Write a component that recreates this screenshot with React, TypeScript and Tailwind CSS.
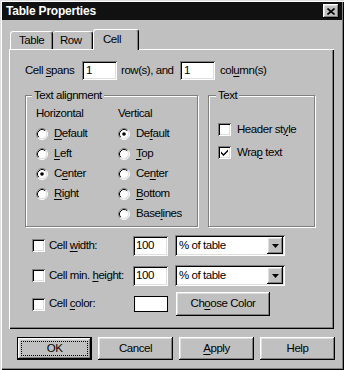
const raised =
  "shadow-[inset_-1px_-1px_#000,inset_1px_1px_#fff,inset_-2px_-2px_#808080,inset_2px_2px_#dfdfdf]";
const sunken =
  "shadow-[inset_1px_1px_#808080,inset_-1px_-1px_#fff,inset_2px_2px_#000,inset_-2px_-2px_#dfdfdf]";

function L({ t, k }: { t: string; k: number }) {
  return (
    <span>
      {t.slice(0, k)}
      <span className="underline decoration-1 underline-offset-[2px]">{t[k]}</span>
      {t.slice(k + 1)}
    </span>
  );
}

function Radio({ checked }: { checked?: boolean }) {
  return (
    <svg width="12" height="12" viewBox="0 0 12 12" className="shrink-0">
      <circle cx="6" cy="6" r="5" fill="#fff" />
      <path d="M2.11 9.89A5.5 5.5 0 0 1 9.89 2.11" fill="none" stroke="#808080" />
      <path d="M9.89 2.11A5.5 5.5 0 0 1 2.11 9.89" fill="none" stroke="#fff" />
      <path d="M2.82 9.18A4.5 4.5 0 0 1 9.18 2.82" fill="none" stroke="#000" />
      <path d="M9.18 2.82A4.5 4.5 0 0 1 2.82 9.18" fill="none" stroke="#dfdfdf" />
      {checked && <circle cx="6" cy="6" r="1.8" fill="#000" />}
    </svg>
  );
}

function Check({ checked }: { checked?: boolean }) {
  return (
    <span className={`w-[13px] h-[13px] shrink-0 bg-white flex items-center justify-center ${sunken}`}>
      {checked && (
        <svg width="13" height="13" viewBox="0 0 13 13">
          <path d="M3 5.5L5.5 8L10 3.5V5.5L5.5 10L3 7.5Z" fill="#000" />
        </svg>
      )}
    </span>
  );
}

function RadioRow({ label, k, checked }: { label: string; k: number; checked?: boolean }) {
  return (
    <div className="h-[20px] flex items-center gap-[6px]">
      <Radio checked={checked} />
      <L t={label} k={k} />
    </div>
  );
}

function Select() {
  return (
    <div className={`ml-[7px] w-[110px] h-[21px] bg-white flex items-center justify-between pl-[4px] pr-[2px] ${sunken}`}>
      <span>% of table</span>
      <span className={`w-[16px] h-[17px] bg-[#c0c0c0] flex items-center justify-center ${raised}`}>
        <svg width="7" height="4" viewBox="0 0 7 4">
          <path d="M0 0H7L3.5 4Z" fill="#000" />
        </svg>
      </span>
    </div>
  );
}

function Btn({ children, main }: { children: React.ReactNode; main?: boolean }) {
  return (
    <div
      className={`relative w-[75px] h-[23px] flex items-center justify-center ${
        main ? "border border-black" : ""
      } ${raised}`}
    >
      {main && <span className="absolute inset-x-[3px] inset-y-[3px] border border-dotted border-black" />}
      {children}
    </div>
  );
}

export default function App() {
  return (
    <div
      className="w-[344px] h-[370px] bg-[#c0c0c0] p-[2px] text-black text-[11.5px] tracking-[-0.45px] leading-none shadow-[inset_1px_1px_#dfdfdf,inset_2px_2px_#fff,inset_-1px_-1px_#000,inset_-2px_-2px_#808080]"
      style={{ fontFamily: '"Liberation Sans", Arial, sans-serif' }}
    >
      {/* title bar */}
      <div className="h-[18px] bg-[#111] flex items-center justify-between pl-[4px] pr-[3px]">
        <span className="text-white font-bold text-[12px] tracking-[-0.2px]">Table Properties</span>
        <span className={`w-[16px] h-[14px] bg-[#c0c0c0] flex items-center justify-center ${raised}`}>
          <svg width="8" height="7" viewBox="0 0 8 7">
            <path d="M0.5 0.5L7.5 6.5M7.5 0.5L0.5 6.5" stroke="#000" strokeWidth="1.6" />
          </svg>
        </span>
      </div>

      <div className="px-[7px] mt-[9px]">
        {/* tabs */}
        <div className="flex items-end h-[20px] pl-[1px]">
          <div className="w-[43px] h-[18px] pl-[8px] flex items-center border-t border-l border-white border-r border-r-black rounded-t-[3px] shadow-[inset_-1px_0_#808080]">
            Table
          </div>
          <div className="w-[40px] h-[18px] pl-[7px] flex items-center border-t border-white border-r border-r-black rounded-t-[3px] shadow-[inset_-1px_0_#808080]">
            Row
          </div>
          <div className="relative z-10 -mb-[1px] w-[46px] h-[21px] pl-[9px] pb-[1px] flex items-center bg-[#c0c0c0] border-t border-l border-white border-r border-r-black rounded-t-[3px] shadow-[inset_-1px_0_#808080]">
            Cell
          </div>
        </div>

        {/* panel */}
        <div className="w-[325px] h-[280px] flex flex-col shadow-[inset_1px_1px_#fff,inset_-1px_-1px_#000,inset_-2px_-2px_#808080]">
          <div className="mt-[12px] pl-[16px] h-[19px] flex items-center">
            <span className="w-[57px]">
              <L t="Cell spans" k={5} />
            </span>
            <span className={`w-[35px] h-[19px] bg-white flex items-center pl-[4px] ${sunken}`}>1</span>
            <span className="ml-[4px] w-[59px]">row(s), and</span>
            <span className={`w-[35px] h-[19px] bg-white flex items-center pl-[4px] ${sunken}`}>1</span>
            <span className="ml-[5px]">
              <L t="column(s)" k={3} />
            </span>
          </div>

          <div className="mt-[15px] pl-[16px] flex gap-[10px]">
            <div className="relative w-[173px] h-[132px] border border-[#808080] shadow-[inset_1px_1px_#fff,1px_1px_#fff] pt-[8px] pl-[10px] flex">
              <span className="absolute -top-[8px] left-[6px] bg-[#c0c0c0] px-[2px] leading-[14px]">
                Text alignment
              </span>
              <div className="w-[82px] flex flex-col">
                <div className="h-[20px] flex items-center">Horizontal</div>
                <RadioRow label="Default" k={0} />
                <RadioRow label="Left" k={0} />
                <RadioRow label="Center" k={1} checked />
                <RadioRow label="Right" k={0} />
              </div>
              <div className="flex flex-col">
                <div className="h-[20px] flex items-center">Vertical</div>
                <RadioRow label="Default" k={2} checked />
                <RadioRow label="Top" k={0} />
                <RadioRow label="Center" k={2} />
                <RadioRow label="Bottom" k={0} />
                <RadioRow label="Baselines" k={4} />
              </div>
            </div>

            <div className="relative w-[107px] h-[132px] border border-[#808080] shadow-[inset_1px_1px_#fff,1px_1px_#fff] pt-[22px] pl-[9px] flex flex-col">
              <span className="absolute -top-[8px] left-[7px] bg-[#c0c0c0] px-[2px] leading-[14px]">Text</span>
              <div className="h-[23px] flex items-center gap-[6px]">
                <Check />
                <L t="Header style" k={9} />
              </div>
              <div className="h-[23px] flex items-center gap-[6px]">
                <Check checked />
                <L t="Wrap text" k={3} />
              </div>
            </div>
          </div>

          <div className="mt-[8px] pl-[23px] h-[21px] flex items-center">
            <Check />
            <span className="ml-[4px] w-[84px]">
              <L t="Cell width:" k={5} />
            </span>
            <span className={`w-[35px] h-[20px] bg-white flex items-center pl-[3px] ${sunken}`}>100</span>
            <Select />
          </div>

          <div className="mt-[9px] pl-[23px] h-[21px] flex items-center">
            <Check />
            <span className="ml-[4px] w-[84px]">
              <L t="Cell min. height:" k={10} />
            </span>
            <span className={`w-[35px] h-[20px] bg-white flex items-center pl-[3px] ${sunken}`}>100</span>
            <Select />
          </div>

          <div className="mt-[6px] pl-[23px] h-[24px] flex items-center">
            <Check />
            <span className="ml-[4px] w-[85px]">
              <L t="Cell color:" k={5} />
            </span>
            <span className="w-[34px] h-[16px] bg-white border border-black" />
            <div className={`ml-[8px] w-[94px] h-[24px] flex items-center justify-center ${raised}`}>
              <L t="Choose Color" k={2} />
            </div>
          </div>
        </div>

        {/* buttons */}
        <div className="mt-[8px] pl-[8px] flex gap-[6px]">
          <Btn main>OK</Btn>
          <Btn>Cancel</Btn>
          <Btn>
            <L t="Apply" k={0} />
          </Btn>
          <Btn>Help</Btn>
        </div>
      </div>
    </div>
  );
}
